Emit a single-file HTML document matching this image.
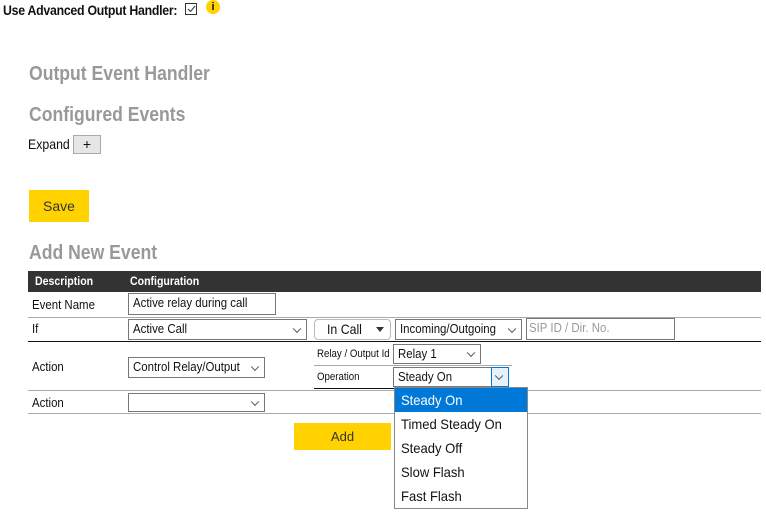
<!DOCTYPE html>
<html><head><meta charset="utf-8"><style>
*{box-sizing:border-box;margin:0;padding:0}
body{width:766px;height:512px;background:#fff;position:relative;overflow:hidden;font-family:"Liberation Sans",sans-serif;color:#111}
.a{position:absolute;white-space:nowrap}
.t{transform:scaleX(.88);transform-origin:0 0}
.n{display:inline-block;transform:scaleX(.88);transform-origin:0 0;white-space:nowrap}
.h{font-weight:bold;color:#999;font-size:20px}
.f{font-size:13px}
.box{position:absolute;border:1px solid #777;background:#fff;font-size:13px;padding-left:4px;line-height:18px;white-space:nowrap;overflow:hidden}
.chev{position:absolute;right:6px;top:50%;width:6px;height:6px;border-right:1px solid #555;border-bottom:1px solid #555;transform:translateY(-70%) rotate(45deg)}
.line{position:absolute;height:1px;background:#aaa}
.yb{position:absolute;background:#ffd200;font-size:14px;text-align:center;color:#333}
</style></head><body>
<div class="a t" style="left:3px;top:2px;font-size:14px;font-weight:bold;letter-spacing:-0.3px">Use Advanced Output Handler:</div>
<div class="a" style="left:185px;top:3px;width:12px;height:12px;border:1px solid #333"><svg width="10" height="10" style="position:absolute;left:0;top:0"><path d="M2 5 L4.5 7.5 L9 2" stroke="#333" fill="none"/></svg></div>
<div class="a" style="left:206px;top:0;width:14px;height:14px;border-radius:50%;background:#ffd200;font-size:11px;font-weight:bold;text-align:center;line-height:14px">i</div>
<div class="a h t" style="left:29px;top:63px">Output Event Handler</div>
<div class="a h t" style="left:29px;top:104px">Configured Events</div>
<div class="a f t" style="left:28px;top:136px;font-size:14px">Expand</div>
<div class="a" style="left:73px;top:135px;width:28px;height:19px;background:#e6e6e6;border:1px solid #aaa;text-align:center;font-size:14px;line-height:17px">+</div>
<div class="yb" style="left:29px;top:190px;width:60px;height:32px;line-height:32px">Save</div>
<div class="a h t" style="left:29px;top:242px">Add New Event</div>
<div class="a" style="left:28px;top:271px;width:733px;height:21px;background:#333;color:#fff;font-size:12px;font-weight:bold;line-height:21px"><span class="n" style="position:absolute;left:7px">Description</span><span class="n" style="position:absolute;left:102px">Configuration</span></div>
<div class="a f t" style="left:32px;top:297px">Event Name</div>
<div class="box" style="left:128px;top:293px;width:148px;height:22px"><span class="n">Active relay during call</span></div>
<div class="line" style="left:28px;top:317px;width:733px"></div>
<div class="a f t" style="left:32px;top:321px">If</div>
<div class="box" style="left:128px;top:319px;width:179px;height:21px"><span class="n">Active Call</span><span class="chev"></span></div>
<div class="box" style="left:314px;top:319px;width:77px;height:21px;border-color:#bbb;border-radius:4px;padding-left:12px;font-size:14px"><span class="n">In Call</span> <span style="position:absolute;right:6px;top:7px;border:4px solid transparent;border-top:5px solid #333"></span></div>
<div class="box" style="left:395px;top:319px;width:127px;height:21px"><span class="n">Incoming/Outgoing</span><span class="chev"></span></div>
<div class="box" style="left:526px;top:318px;width:149px;height:22px;color:#999;padding-left:2px"><span class="n">SIP ID / Dir. No.</span></div>
<div class="line" style="left:28px;top:341px;width:733px;background:#111"></div>
<div class="a f t" style="left:32px;top:359px">Action</div>
<div class="box" style="left:128px;top:357px;width:137px;height:21px"><span class="n">Control Relay/Output</span><span class="chev"></span></div>
<div class="a t" style="left:317px;top:348px;font-size:11px">Relay / Output Id</div>
<div class="box" style="left:393px;top:344px;width:88px;height:20px"><span class="n">Relay 1</span><span class="chev"></span></div>
<div class="line" style="left:314px;top:365px;width:198px"></div>
<div class="a t" style="left:317px;top:371px;font-size:11px">Operation</div>
<div class="box" style="left:393px;top:367px;width:116px;height:20px;overflow:visible"><span class="n">Steady On</span><span style="position:absolute;right:-1px;top:-1px;width:18px;height:20px;border:1px solid #0078d7;background:#e5f1fb"><span class="chev"></span></span></div>
<div class="line" style="left:314px;top:388px;width:198px;background:#111"></div>
<div class="line" style="left:28px;top:390px;width:733px"></div>
<div class="a f t" style="left:32px;top:395px">Action</div>
<div class="box" style="left:128px;top:393px;width:137px;height:19px"><span class="chev"></span></div>
<div class="line" style="left:28px;top:413px;width:733px"></div>
<div class="yb" style="left:294px;top:423px;width:97px;height:27px;line-height:27px;font-size:13px">Add</div>
<div class="a" style="left:394px;top:387px;width:134px;height:122px;border:1px solid #888;background:#fff;font-size:14px;line-height:24px">
<div style="background:#0078d7;color:#fff;padding-left:6px"><span class="n" style="transform:scaleX(.93)">Steady On</span></div>
<div style="padding-left:6px"><span class="n" style="transform:scaleX(.93)">Timed Steady On</span></div>
<div style="padding-left:6px"><span class="n" style="transform:scaleX(.93)">Steady Off</span></div>
<div style="padding-left:6px"><span class="n" style="transform:scaleX(.93)">Slow Flash</span></div>
<div style="padding-left:6px"><span class="n" style="transform:scaleX(.93)">Fast Flash</span></div>
</div>
</body></html>
